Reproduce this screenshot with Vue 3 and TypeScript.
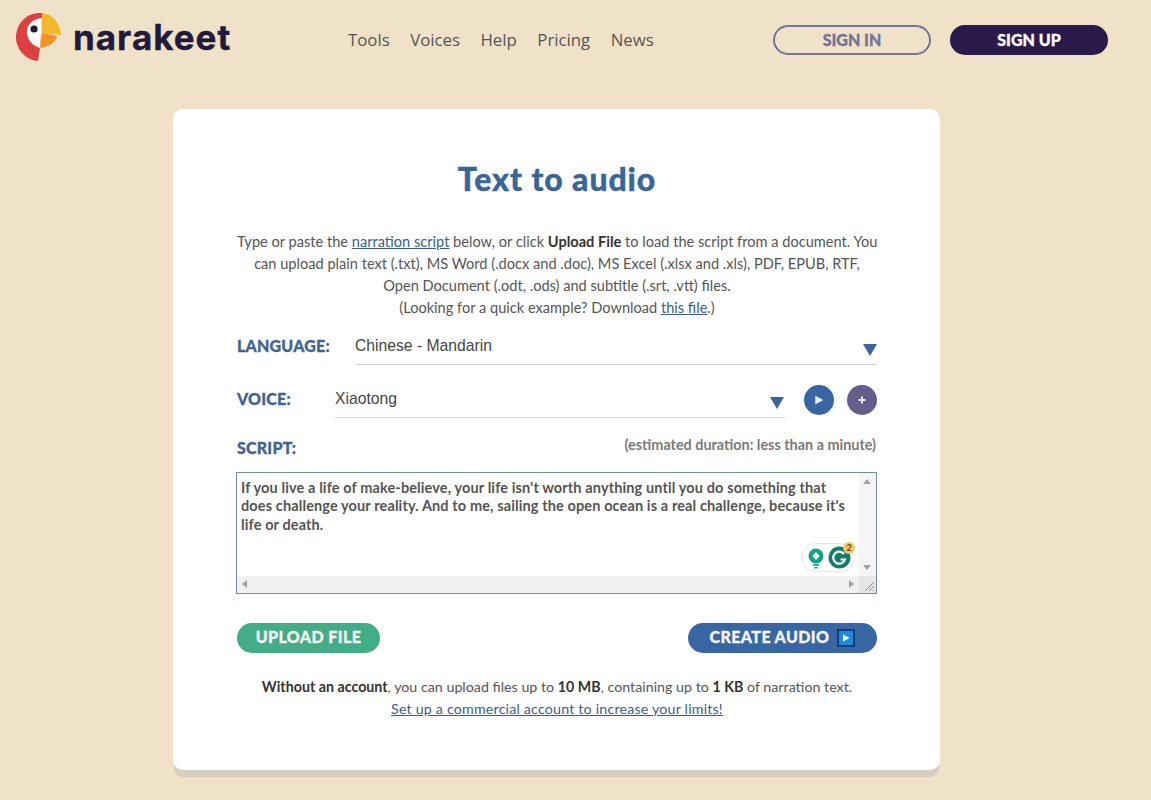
<script setup lang="ts">
const navItems: string[] = ['Tools', 'Voices', 'Help', 'Pricing', 'News']
</script>

<template>
  <div class="page">
    <header class="top">
      <a class="logo">
        <svg width="46" height="48" viewBox="0 0 46 48">
          <path d="M26 0 A24 24 0 0 0 22 48 L24 35 L26 5Z" fill="#dc4040" />
          <path d="M26 5 C17 6 11 11 11 19 C11 27 17 33 24 35Z" fill="#fff" />
          <circle cx="18" cy="16" r="3.600" fill="#1f1a38" />
          <path d="M26 0 C37 1 44 10 45 22 L26 20Z" fill="#f4b62a" />
          <path d="M26 20 L41 23 C40 29 33 34 24 35Z" fill="#f39325" />
        </svg>
        <span class="logo-text">narakeet</span>
      </a>
      <nav class="nav">
        <a v-for="item in navItems" :key="item">{{ item }}</a>
      </nav>
      <div class="auth">
        <a class="pill outline">SIGN IN</a>
        <a class="pill dark">SIGN UP</a>
      </div>
    </header>

    <main class="card">
      <h1>Text to audio</h1>
      <p class="intro">
        Type or paste the <a>narration script</a> below, or click <b>Upload File</b> to load the script from a document. You<br />
        can upload plain text (.txt), MS Word (.docx and .doc), MS Excel (.xlsx and .xls), PDF, EPUB, RTF,<br />
        Open Document (.odt, .ods) and subtitle (.srt, .vtt) files.<br />
        (Looking for a quick example? Download <a>this file</a>.)
      </p>

      <div class="row lang-row">
        <label>LANGUAGE:</label>
        <div class="select lang-select">
          <span>Chinese - Mandarin</span>
          <i class="arrow"></i>
        </div>
      </div>

      <div class="row voice-row">
        <label>VOICE:</label>
        <div class="select voice-select">
          <span>Xiaotong</span>
          <i class="arrow"></i>
        </div>
        <button class="round play">
          <svg width="10" height="10" viewBox="0 0 8 8"><path d="M1 0.500 L7.500 4 L1 7.500Z" fill="#e6edf6" /></svg>
        </button>
        <button class="round plus">
          <svg width="8" height="8" viewBox="0 0 8 8"><path d="M3 0.500h2v2.500h2.500v2H5v2.500H3V5H0.500V3H3Z" fill="#ece9f3" /></svg>
        </button>
      </div>

      <div class="script-head">
        <label>SCRIPT:</label>
        <span class="estimate">(estimated duration: less than a minute)</span>
      </div>

      <div class="textbox">
        <div class="textbox-text">
          If you live a life of make-believe, your life isn't worth anything until you do something that does challenge your reality. And to me, sailing the open ocean is a real challenge, because it's life or death.
        </div>
        <div class="vbar">
          <i class="tri up"></i>
          <i class="tri down"></i>
        </div>
        <div class="hbar">
          <i class="tri left"></i>
          <i class="tri right"></i>
        </div>
        <div class="corner">
          <svg width="17" height="17" viewBox="0 0 17 17">
            <path d="M6 15 L15 6 M10 15 L15 10 M14 15 L15 14" stroke="#8f8f8f" stroke-width="1" fill="none" />
          </svg>
        </div>
        <div class="grammarly">
          <svg width="18" height="22" viewBox="0 0 18 22">
            <circle cx="9" cy="9" r="7.500" fill="#14a18a" />
            <path d="M9 5 L12.500 9 L9 13 L5.500 9Z" fill="#fff" />
            <rect x="6" y="17" width="6" height="1.800" rx="0.900" fill="#14a18a" />
            <rect x="7" y="20" width="4" height="1.500" rx="0.750" fill="#14a18a" />
          </svg>
          <svg class="g-mark" width="23" height="23" viewBox="0 0 23 23">
            <circle cx="11.500" cy="11.500" r="11" fill="#0f7f6c" />
            <path d="M16 8 A6 6 0 1 0 17 13.500 H12.500" fill="none" stroke="#fff" stroke-width="2.200" />
          </svg>
          <span class="g-count">2</span>
        </div>
      </div>

      <div class="actions">
        <button class="action upload">UPLOAD FILE</button>
        <button class="action create">
          CREATE AUDIO
          <span class="create-icon">
            <svg width="8" height="8" viewBox="0 0 8 8"><path d="M1 0.500 L7.500 4 L1 7.500Z" fill="#fff" /></svg>
          </span>
        </button>
      </div>

      <p class="limits">
        <b>Without an account</b>, you can upload files up to <b>10 MB</b>, containing up to <b>1 KB</b> of narration text.<br />
        <a>Set up a commercial account to increase your limits!</a>
      </p>
    </main>
  </div>
</template>

<style>
html, body {
  background: #f0e2c8;
}
</style>

<style scoped>
.page {
  height: 800px;
  overflow: hidden;
  background: #f0e2c8;
  font-family: "Lato", "Open Sans", sans-serif;
  color: #555;
}

.top {
  display: flex;
  align-items: center;
  height: 80px;
  padding: 0 43px 0 16px;
  box-sizing: border-box;
}

.logo {
  display: flex;
  align-items: center;
  gap: 11px;
  width: 332px;
  margin-top: -6px;
}

.logo-text {
  font-family: "Inter", sans-serif;
  font-weight: 700;
  font-size: 35px;
  letter-spacing: 1px;
  -webkit-text-stroke: 0.4px currentColor;
  color: #221a3c;
}

.nav {
  display: flex;
  gap: 20.5px;
  flex: 1;
  margin-top: -2px;
  font-family: "Open Sans", sans-serif;
  font-size: 16.8px;
  color: #555;
}

.auth {
  display: flex;
  gap: 19px;
}

.pill {
  display: flex;
  align-items: center;
  justify-content: center;
  box-sizing: border-box;
  width: 158px;
  height: 30px;
  padding-bottom: 2px;
  border-radius: 15px;
  font-weight: 900;
  font-size: 16px;
  -webkit-text-stroke: 0.3px currentColor;
}

.outline {
  border: 2px solid #74749a;
  color: #74749a;
}

.dark {
  background: #2a1a4c;
  color: #fff;
}

.card {
  width: 767px;
  height: 661px;
  margin: 29px 0 0 173px;
  padding: 50px 63px 0 64px;
  box-sizing: border-box;
  background: #fff;
  border-radius: 10px;
  box-shadow: 0 8px 0 -1px #d5cfc3;
}

h1 {
  margin: 0 0 32px;
  font-size: 32px;
  line-height: 40px;
  font-weight: 900;
  letter-spacing: 0.9px;
  -webkit-text-stroke: 0.4px currentColor;
  text-align: center;
  color: #3a6599;
}

.intro {
  margin: 0;
  font-size: 14.6px;
  line-height: 22px;
  text-align: center;
  white-space: nowrap;
  color: #555;
}

.intro a, .limits a {
  color: #37608f;
  text-decoration: underline;
}

.intro b {
  font-weight: 700;
  color: #333;
}

.row {
  display: flex;
  align-items: flex-start;
}

label {
  font-weight: 900;
  font-size: 16px;
  letter-spacing: 0.2px;
  -webkit-text-stroke: 0.3px currentColor;
  color: #3f6490;
}

.lang-row {
  margin-top: 8px;
}

.lang-row label {
  width: 118px;
  line-height: 38px;
}

.select {
  display: flex;
  justify-content: space-between;
  box-sizing: border-box;
  height: 38px;
  border-bottom: 1px solid #d5d5d5;
  font-family: "Liberation Sans", sans-serif;
  font-size: 15.7px;
  line-height: 38px;
  color: #444;
}

.lang-select {
  flex: 1;
}

.arrow {
  width: 0;
  height: 0;
  margin-top: 17px;
  border-left: 7px solid transparent;
  border-right: 7px solid transparent;
  border-top: 12px solid #3a6599;
}

.voice-row {
  margin-top: 15px;
}

.voice-row label {
  width: 98px;
  line-height: 38px;
}

.voice-select {
  width: 450px;
}

.voice-select .arrow {
  margin-right: 1px;
}

.round {
  display: flex;
  align-items: center;
  justify-content: center;
  width: 30px;
  height: 30px;
  padding: 0;
  margin-top: 5px;
  border: 0;
  border-radius: 50%;
}

.play {
  margin-left: 19px;
  background: #3766a3;
}

.plus {
  margin-left: 13px;
  background: #655d8c;
}

.script-head {
  display: flex;
  justify-content: space-between;
  align-items: center;
  height: 24px;
  margin-top: 17px;
}

.estimate {
  font-size: 14.4px;
  font-weight: 700;
  color: #7a7a7a;
  margin: -5px 1px 0 0;
}

.textbox {
  position: relative;
  display: grid;
  grid-template-columns: 1fr 17px;
  grid-template-rows: 1fr 17px;
  box-sizing: border-box;
  height: 122px;
  margin: 13px 0 0 -1px;
  border: 1px solid #6d8db3;
}

.textbox-text {
  padding: 5.5px 4px 0 4px;
  font-size: 14.5px;
  line-height: 18.5px;
  letter-spacing: 0.12px;
  font-weight: 700;
  color: #555;
}

.vbar, .hbar, .corner {
  position: relative;
  background: #f1f1f1;
}

.vbar {
  background: #f5f5f5;
}

.corner {
  background: #e6e6e6;
}

.tri {
  position: absolute;
  width: 0;
  height: 0;
}

.tri.up {
  top: 6px;
  left: 4px;
  border: 4px solid transparent;
  border-top: 0;
  border-bottom: 5px solid #a3a3a3;
}

.tri.down {
  bottom: 6px;
  left: 4px;
  border: 4px solid transparent;
  border-bottom: 0;
  border-top: 5px solid #a3a3a3;
}

.tri.left {
  top: 4px;
  left: 5px;
  border: 4px solid transparent;
  border-left: 0;
  border-right: 5px solid #a3a3a3;
}

.tri.right {
  top: 4px;
  right: 5px;
  border: 4px solid transparent;
  border-right: 0;
  border-left: 5px solid #a3a3a3;
}

.grammarly {
  position: absolute;
  right: 21px;
  bottom: 21px;
  display: flex;
  align-items: center;
  gap: 3px;
  box-sizing: border-box;
  width: 54px;
  height: 29px;
  padding: 0 2px 0 5px;
  background: #fff;
  border: 1px solid #e8e8e8;
  border-radius: 15px;
}

.g-count {
  position: absolute;
  top: -2px;
  right: -1px;
  width: 12px;
  height: 12px;
  border-radius: 50%;
  background: #f7c55f;
  font-size: 9px;
  line-height: 12px;
  font-weight: 700;
  text-align: center;
  color: #5a4a20;
}

.actions {
  display: flex;
  justify-content: space-between;
  margin-top: 29px;
}

.action {
  display: flex;
  align-items: center;
  justify-content: center;
  height: 30px;
  padding: 0 0 3px;
  border: 0;
  border-radius: 15px;
  font-family: inherit;
  font-weight: 900;
  font-size: 16px;
  letter-spacing: 0.4px;
  -webkit-text-stroke: 0.3px currentColor;
  color: #f4f4f4;
}

.upload {
  width: 143px;
  background: #43ad87;
}

.create {
  gap: 8px;
  width: 189px;
  background: #3766a3;
}

.create-icon {
  display: flex;
  align-items: center;
  justify-content: center;
  box-sizing: border-box;
  width: 18px;
  height: 18px;
  margin-top: 3px;
  background: #1c8ad8;
  border: 2px solid #0f3f78;
  -webkit-text-stroke: 0;
}

.limits {
  margin: 23px 0 0;
  font-size: 14.25px;
  line-height: 22px;
  text-align: center;
  color: #555;
}

.limits a {
  letter-spacing: 0.18px;
}

.limits b {
  font-weight: 700;
  color: #333;
}
</style>
